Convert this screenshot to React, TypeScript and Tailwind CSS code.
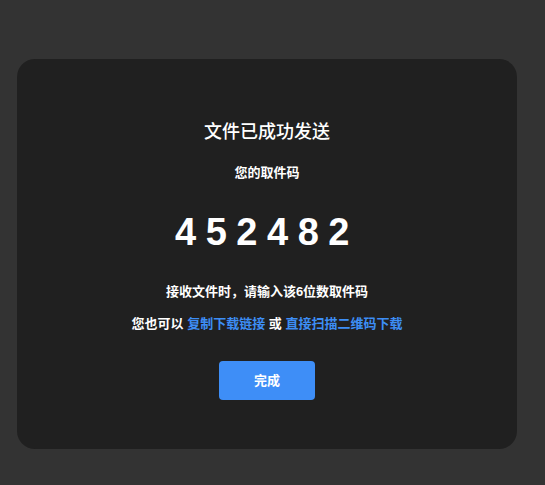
export default function App() {
    return (
        <div className="min-h-screen w-full bg-[#333333] pt-[59px] pl-[17px] font-['Liberation_Sans','Noto_Sans_CJK_SC',sans-serif]">
            <div className="w-[500px] h-[390px] rounded-[18px] bg-[#202020] flex flex-col items-center text-white">
                {/* Title */}
                <h2 className="mt-[61px] text-[18px] leading-[24px] font-medium">文件已成功发送</h2>
                <p className="mt-[20px] text-[13px] leading-[18px] font-semibold">您的取件码</p>

                {/* Pickup code */}
                <div className="mt-[28px] text-[38px] leading-[44px] font-bold tracking-[9.5px]">452482</div>

                <p className="mt-[29px] text-[13px] leading-[18px] font-semibold">接收文件时，请输入该6位数取件码</p>
                <p className="mt-[14px] text-[13px] leading-[18px] font-semibold">
                    您也可以 <span className="text-[#3d8ef5]">复制下载链接</span> 或{' '}
                    <span className="text-[#3d8ef5]">直接扫描二维码下载</span>
                </p>

                <button className="mt-[28px] w-[96px] h-[39px] rounded-[4px] bg-[#3e8ef7] text-[13px] font-semibold text-white">
                    完成
                </button>
            </div>
        </div>
    );
}
